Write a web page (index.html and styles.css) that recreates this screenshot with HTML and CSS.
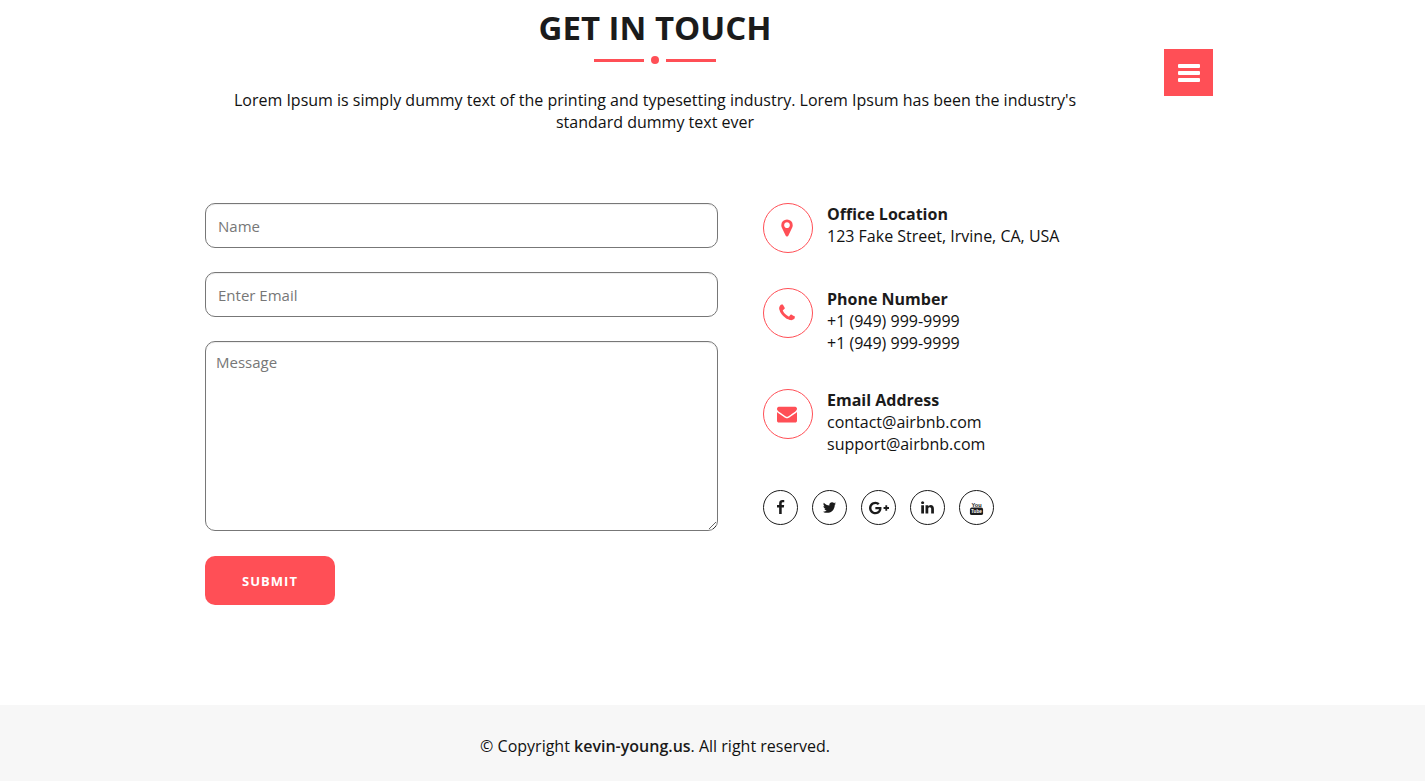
FILE: index.html
```
<!DOCTYPE html>
<html lang="en">
<head>
<meta charset="utf-8">
<meta name="viewport" content="width=device-width, initial-scale=1">
<title>Get in touch</title>
<link rel="stylesheet" href="styles.css">
</head>
<body>
<button class="menu-toggle" type="button" aria-label="Open menu">
  <svg class="menu-icon" viewBox="0 0 22 18" aria-hidden="true"><rect width="22" height="4" rx="1"/><rect y="7" width="22" height="4" rx="1"/><rect y="14" width="22" height="4" rx="1"/></svg>
</button>
<main class="contact">
  <header class="section-head">
    <h1 class="title">GET IN TOUCH</h1>
    <div class="divider"><span class="divider-line"></span><span class="divider-dot"></span><span class="divider-line"></span></div>
    <p class="intro">Lorem Ipsum is simply dummy text of the printing and typesetting industry. Lorem Ipsum has been the industry's standard dummy text ever</p>
  </header>
  <div class="columns">
    <form class="form">
      <div class="fields">
        <input class="field" type="text" placeholder="Name" aria-label="Name">
        <input class="field" type="email" placeholder="Enter Email" aria-label="Enter Email">
        <textarea class="field field-message" placeholder="Message" aria-label="Message"></textarea>
      </div>
      <button class="submit" type="submit">SUBMIT</button>
    </form>
    <div class="details">
      <section class="detail">
        <span class="detail-icon"><svg class="icon-medium" viewBox="0 0 1792 1792" aria-hidden="true"><path d="M1152 640q0-106-75-181t-181-75-181 75-75 181 75 181 181 75 181-75 75-181zm256 0q0 109-33 179l-364 774q-16 33-47.5 52t-67.5 19-67.5-19-46.5-52l-365-774q-33-70-33-179 0-212 150-362t362-150 362 150 150 362z"/></svg></span>
        <div><h2 class="detail-title">Office Location</h2><p class="detail-text">123 Fake Street, Irvine, CA, USA</p></div>
      </section>
      <section class="detail">
        <span class="detail-icon"><svg class="icon-medium" viewBox="0 0 1792 1792" aria-hidden="true"><path d="M1600 1240q0 27-10 70.5t-21 68.5q-21 50-122 106-94 51-186 51-27 0-53-3.5t-57.5-12.5-47-14.5-55.5-20.5-49-18q-98-35-175-83-127-79-264-216t-216-264q-48-77-83-175-3-9-18-49t-20.5-55.5-14.5-47-12.5-57.5-3.5-53q0-92 51-186 56-101 106-122 25-11 68.5-21t70.5-10q14 0 21 3 18 6 53 76 11 19 30 54t35 63.5 31 53.5q3 4 17.5 25t21.5 35.5 7 28.5q0 20-28.5 50t-62 55-62 53-28.5 46q0 9 5 22.5t8.5 20.5 14 24 11.5 19q76 137 174 235t235 174q2 1 19 11.5t24 14 20.5 8.5 22.5 5q18 0 46-28.5t53-62 55-62 50-28.5q14 0 28.5 7t35.5 21.5 25 17.5q25 15 53.5 31t63.5 35 54 30q70 35 76 53 3 7 3 21z"/></svg></span>
        <div><h2 class="detail-title">Phone Number</h2><p class="detail-text">+1 (949) 999-9999</p><p class="detail-text">+1 (949) 999-9999</p></div>
      </section>
      <section class="detail">
        <span class="detail-icon"><svg class="icon-medium" viewBox="0 0 1792 1792" aria-hidden="true"><path d="M1792 710v794q0 66-47 113t-113 47h-1472q-66 0-113-47t-47-113v-794q44 49 101 87 362 246 497 345 57 42 92.5 65.5t94.5 48 110 24.5h2q51 0 110-24.5t94.5-48 92.5-65.5q170-123 498-345 57-39 100-87zm0-294q0 79-49 151t-122 123q-376 261-468 325-10 7-42.5 31t-54 38.5-52 32.5-57.5 27-50 9h-2q-23 0-50-9t-57.5-27-52-32.5-54-38.5-42.5-31q-91-64-262-182.5t-205-142.5q-62-42-117-115.5t-55-136.5q0-78 41.5-130t118.5-52h1472q65 0 112.5 47t47.5 113z"/></svg></span>
        <div><h2 class="detail-title">Email Address</h2><p class="detail-text">contact@airbnb.com</p><p class="detail-text">support@airbnb.com</p></div>
      </section>
      <nav class="social" aria-label="Social media">
        <a class="social-link" href="#" aria-label="Facebook"><svg class="icon-small" viewBox="0 0 1792 1792"><path d="M1343 12v264h-157q-86 0-116 36t-30 108v189h293l-39 296h-254v759h-306v-759h-255v-296h255v-218q0-186 104-288.5t277-102.5q147 0 228 12z"/></svg></a>
        <a class="social-link" href="#" aria-label="Twitter"><svg class="icon-small" viewBox="0 0 1792 1792"><path d="M1684 408q-67 98-162 167 1 14 1 42 0 130-38 259.5t-115.5 248.5-184.5 210.5-258 146-323 54.5q-271 0-496-145 35 4 78 4 225 0 401-138-105-2-188-64.5t-114-159.5q33 5 61 5 43 0 85-11-112-23-185.5-111.5t-73.5-205.5v-4q68 38 146 41-66-44-105-115t-39-154q0-88 44-163 121 149 294.5 238.5t371.5 99.5q-8-38-8-74 0-134 94.5-228.5t228.5-94.5q140 0 236 102 109-21 205-78-37 115-142 178 93-10 186-50z"/></svg></a>
        <a class="social-link" href="#" aria-label="Google Plus"><svg class="icon-wide" viewBox="0 0 2304 1792"><path d="M1437 913q0 208-87 370.5t-248 254-369 91.5q-149 0-285-58t-234-156-156-234-58-285 58-285 156-234 234-156 285-58q286 0 491 192l-199 191q-117-113-292-113-123 0-227.5 62t-165.5 168.5-61 232.5 61 232.5 165.5 168.5 227.5 62q83 0 152.5-23t114.5-57.5 78.5-78.5 49-83 21.5-74h-416v-252h692q12 63 12 122zm867-122v210h-209v209h-210v-209h-209v-210h209v-209h210v209h209z"/></svg></a>
        <a class="social-link" href="#" aria-label="LinkedIn"><svg class="icon-small" viewBox="0 0 1792 1792"><path d="M477 625v991h-330v-991h330zm21-306q1 73-50.5 122t-135.5 49h-2q-82 0-132-49t-50-122q0-74 51.5-122.5t134.5-48.5 133 48.5 51 122.5zm1166 729v568h-329v-530q0-105-40.5-164.5t-126.5-59.5q-63 0-105.5 34.5t-63.5 85.5q-11 30-11 81v553h-329q2-399 2-647t-1-296l-1-48h329v144h-2q20-32 41-56t56.5-52 87-43.5 114.5-15.5q171 0 275 113.5t104 332.5z"/></svg></a>
        <a class="social-link" href="#" aria-label="YouTube"><svg class="icon-small" viewBox="0 0 16 16"><text class="tube-top" x="8" y="7" text-anchor="middle">You</text><rect x="1" y="8" width="14" height="8" rx="2"/><text class="tube-bottom" x="8" y="14" text-anchor="middle">Tube</text></svg></a>
      </nav>
    </div>
  </div>
</main>
<footer class="footer">
  <p class="copyright">© Copyright <a class="site-link" href="#">kevin-young.us</a>. All right reserved.</p>
</footer>
</body>
</html>
```
FILE: styles.css
```
:root {
  --accent: #ff4f56;
  --ink: #1b1b1b;
  --gutter: 115px;
}
* { box-sizing: border-box; }
body {
  margin: 0;
  min-height: 100vh;
  display: flex;
  flex-direction: column;
  background: #fff;
  color: #111;
  font: 16px/22px "Open Sans", sans-serif;
}
h1, h2, p { margin: 0; }
svg { display: block; fill: currentColor; }

.menu-toggle {
  position: fixed;
  top: 49px;
  right: 212px;
  width: 49px;
  height: 47px;
  display: grid;
  place-items: center;
  padding: 0;
  border: 0;
  background: var(--accent);
  color: #fff;
}
.menu-icon { width: 22px; height: 18px; }

.contact {
  flex: 1;
  width: 100%;
  padding: 8px var(--gutter) 100px 0;
}
.section-head, .columns { max-width: 900px; margin: 0 auto; }
.section-head { text-align: center; }
.title {
  font-size: 33px;
  line-height: 40px;
  font-weight: 700;
  color: var(--ink);
}
.divider {
  display: flex;
  justify-content: center;
  align-items: center;
  gap: 7px;
  margin: 8px 0 25px;
}
.divider-line { width: 50px; height: 3px; background: var(--accent); }
.divider-dot { width: 8px; height: 8px; border-radius: 50%; background: var(--accent); }
.intro { padding: 0 20px; }

.columns {
  display: grid;
  grid-template-columns: 3fr 2fr;
  gap: 45px;
  margin-top: 70px;
}
.form {
  display: flex;
  flex-direction: column;
  align-items: flex-start;
  gap: 25px;
}
.fields {
  width: 100%;
  display: flex;
  flex-direction: column;
  gap: 24px;
}
.field {
  width: 100%;
  height: 45px;
  padding: 2px 12px;
  border: 1px solid #777;
  border-radius: 10px;
  background: #fff;
  box-shadow: inset 0 1px 1px #eee;
  color: var(--ink);
  font: 15px/22px "Open Sans", sans-serif;
}
.field::placeholder { color: #777; opacity: 1; }
.field-message { height: 190px; padding: 9px 10px; resize: both; }
.submit {
  width: 130px;
  height: 49px;
  border: 0;
  border-radius: 10px;
  background: var(--accent);
  color: #fff;
  font: 700 13px/22px "Open Sans", sans-serif;
  letter-spacing: 1px;
}

.details { display: flex; flex-direction: column; gap: 35px; }
.detail { display: flex; gap: 14px; }
.detail-icon {
  flex: none;
  width: 50px;
  height: 50px;
  display: grid;
  place-items: center;
  padding-right: 2px;
  border: 1px solid var(--accent);
  border-radius: 50%;
  color: var(--accent);
}
.detail-title { font-size: 16px; line-height: 22px; font-weight: 700; color: var(--ink); }
.icon-medium { width: 20px; height: 20px; }

.social { display: flex; gap: 14px; }
.social-link {
  width: 35px;
  height: 35px;
  display: grid;
  place-items: center;
  border: 1px solid var(--ink);
  border-radius: 50%;
  color: var(--ink);
}
.icon-small { width: 15px; height: 15px; }
.icon-wide { width: 20px; height: 16px; }
.tube-top, .tube-bottom { font: 700 6px "Liberation Sans", sans-serif; }
.tube-bottom { fill: #fff; font-size: 5px; }

.footer {
  padding: 30px var(--gutter) 24px 0;
  background: #f7f7f7;
  text-align: center;
}
.site-link { color: var(--ink); font-weight: 600; text-decoration: none; }
```
